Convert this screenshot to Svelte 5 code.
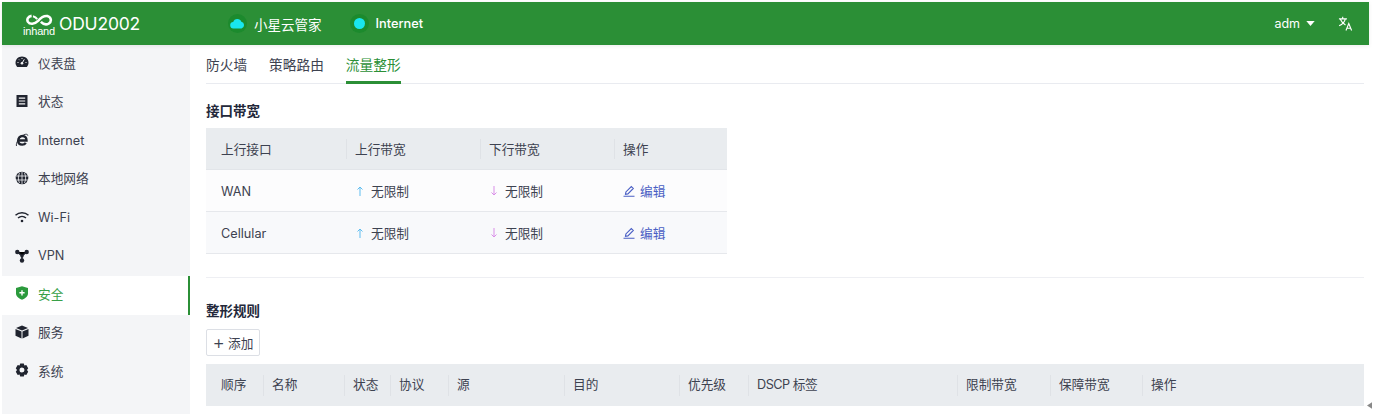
<script>
  const nav = [
    { k: 'dash', t: '仪表盘' }, { k: 'status', t: '状态' }, { k: 'ie', t: 'Internet', latin: true },
    { k: 'globe', t: '本地网络' }, { k: 'wifi', t: 'Wi-Fi', latin: true }, { k: 'vpn', t: 'VPN', latin: true },
    { k: 'shield', t: '安全', active: true }, { k: 'box', t: '服务' }, { k: 'gear', t: '系统' }
  ];
  const rows = ['WAN', 'Cellular'];
  const head1 = ['上行接口', '上行带宽', '下行带宽', '操作'];
  const head2 = ['顺序', '名称', '状态', '协议', '源', '目的', '优先级', 'DSCP 标签', '限制带宽', '保障带宽', '操作'];
</script>

<div class="page">
  <header class="top">
    <div class="brand">
      <div class="logo">
        <svg class="knot" viewBox="0 0 30 13" width="28" height="12" fill="none" stroke="#fff" stroke-width="2.800">
          <path d="M7 2C3 2.500 1.500 6 3 8.500 5 11.500 10 11.500 14 7.500 17 4 20.500 1.500 24.500 2.300 28.500 3.500 29 8.500 25.500 10.500 22.500 12 19.500 11 17 8.500" />
          <path d="M8.500 2.500C10.500 3 12 4 13 5.500" stroke-width="2.200" />
        </svg>
        <span class="inhand">inhand</span>
      </div>
      <span class="model">ODU2002</span>
    </div>
    <div class="stat first">
      <span class="halo">
        <svg viewBox="0 0 14 10" width="15" height="11"><path fill="#19e6ee" d="M3.400 9.600A3 3 0 0 1 3 3.600 4 4 0 0 1 10.600 3.400 3.200 3.200 0 0 1 10.800 9.600Z" /></svg>
      </span>
      <span>小星云管家</span>
    </div>
    <div class="stat second">
      <span class="halo"><span class="dot"></span></span>
      <span class="med">Internet</span>
    </div>
    <div class="grow"></div>
    <span class="user">adm</span>
    <svg class="caret" viewBox="0 0 10 6" width="9" height="5"><path fill="#fff" d="M0 0h10L5 6z" /></svg>
    <svg class="lang" viewBox="0 0 16 16" width="15" height="15" fill="none" stroke="#fff" stroke-width="1.200">
      <path d="M1 3h8.500M5 .8V3M7.800 3C7.200 6 4.300 9 1.200 10.500M2.500 3.500C3.500 6 5.500 8 8 9.500" />
      <path d="M8.500 15.500l3-7.500 3 7.500M9.700 13h3.700" />
    </svg>
  </header>

  <div class="body">
    <nav class="side">
      {#each nav as n}
        <div class="item" class:active={n.active} class:latin={n.latin}>
          <svg viewBox="0 0 14 14" width="14" height="14" class="ico">
            {#if n.k === 'dash'}
              <path fill="currentColor" d="M7 1.500C3.200 1.500.5 4.300.5 7.700c0 1.700.7 3.100 1.700 4.300h9.600c1-1.200 1.700-2.600 1.700-4.300 0-3.400-2.700-6.200-6.500-6.200z" />
              <circle cx="7" cy="8.300" r="1.300" fill="#f4f5f7" /><path stroke="#f4f5f7" d="M7 8.300 9.300 4.300" />
              <path stroke="#f4f5f7" d="M2.500 7.500h1M7 3v1M10.500 7.500h1M4 4.500l.7.700" />
            {:else if n.k === 'status'}
              <path fill="currentColor" fill-rule="evenodd" d="M1.500 1h11v12h-11zM3.800 3.500v1.200h6.400V3.500zm0 2.900v1.200h6.400V6.400zm0 2.900v1.200h6.400V9.300z" />
            {:else if n.k === 'ie'}
              <path fill="none" stroke="currentColor" stroke-width="2.400" d="M3.800 7.500h7.700C11.500 4.500 9.800 3 7.500 3 5 3 3.200 5 3.200 7.800c0 2.400 1.600 3.800 4 3.800 1.600 0 2.800-.6 3.600-1.800" />
              <path fill="none" stroke="currentColor" stroke-width=".9" d="M1.500 13C.5 10.500 4 4 9 1.800c2-1 3.800-.6 3.800.8" />
            {:else if n.k === 'globe'}
              <circle cx="7" cy="7" r="6.300" fill="currentColor" />
              <path fill="none" stroke="#f4f5f7" stroke-width=".8" d="M1 5h12M1 9h12M7 1v12M4.500 2c-1.500 3-1.500 7 0 10M9.500 2c1.500 3 1.500 7 0 10" />
            {:else if n.k === 'wifi'}
              <path fill="none" stroke="currentColor" stroke-width="1.500" d="M.5 5.300c3.700-3.400 9.300-3.400 13 0M3 8c2.300-2 5.700-2 8 0" />
              <circle cx="7" cy="11" r="1.300" fill="currentColor" />
            {:else if n.k === 'vpn'}
              <path stroke="currentColor" stroke-width="1.500" d="M2.500 3 7 7l4.500-4M7 7v4.500" />
              <circle cx="2.300" cy="3" r="2.200" fill="currentColor" /><circle cx="11.700" cy="3" r="2.200" fill="currentColor" />
              <circle cx="7" cy="11.500" r="2.200" fill="currentColor" /><circle cx="7" cy="7" r="1.700" fill="currentColor" />
            {:else if n.k === 'shield'}
              <path fill="currentColor" d="M7 .3 1 2v5.500c0 3 3 5.200 6 6.300 3-1.100 6-3.300 6-6.300V2z" />
              <path stroke="#fff" stroke-width="1.400" d="M7 4.200v5.200M4.400 6.800h5.200" />
            {:else if n.k === 'box'}
              <path fill="currentColor" d="M7 .6 1 3l6 2.400L13 3zM.5 4v6.700L6.500 13.400V6.500zM13.500 4 7.500 6.500v6.900l6-2.700z" />
            {:else}
              <path fill="currentColor" fill-rule="evenodd" d="M5.200.6h3.600l.6 1.800 1.900-.4 1.900 3.200L12 7l1.200 1.800-1.900 3.200-1.900-.4-.6 1.800H5.200l-.6-1.800-1.900.4L.8 8.800 2 7 .8 5.200 2.700 2l1.900.4zM7 4.500a2.500 2.500 0 1 0 0 5 2.500 2.500 0 0 0 0-5z" />
            {/if}
          </svg>
          <span>{n.t}</span>
        </div>
      {/each}
    </nav>

    <main class="main">
      <div class="tabs">
        <span class="tab">防火墙</span>
        <span class="tab">策略路由</span>
        <span class="tab on">流量整形</span>
      </div>

      <h3 class="title t1">接口带宽</h3>
      <div class="table t-if">
        <div class="row head">
          {#each head1 as h, i}
            <div class="cell" class:sep={i > 0}>{h}</div>
          {/each}
        </div>
        {#each rows as r, i}
          <div class="row data" class:alt={i === 1}>
            <div class="cell name">{r}</div>
            <div class="cell limit">
              <svg viewBox="0 0 8 10" width="8" height="10" fill="none" stroke="#5fbdf0"><path d="M4 10V1M1.500 3.500 4 1l2.500 2.500" /></svg>
              无限制
            </div>
            <div class="cell limit">
              <svg viewBox="0 0 8 10" width="8" height="10" fill="none" stroke="#d98fe8"><path d="M4 0v9M1.500 6.500 4 9l2.500-2.500" /></svg>
              无限制
            </div>
            <div class="cell link">
              <svg viewBox="0 0 12 12" width="12" height="12" fill="none" stroke="#4a5fc4" stroke-width="1.100"><path d="M.5 11.300h11M2.500 9.300l.4-2.400L8.300 1.500l2 2-5.400 5.400z" /></svg>
              编辑
            </div>
          </div>
        {/each}
      </div>

      <div class="divider"></div>

      <h3 class="title t2">整形规则</h3>
      <button class="add"><span class="plus">+</span> 添加</button>
      <div class="table t-rule">
        <div class="row head2">
          {#each head2 as h, i}
            <div class="cell" class:sep={i > 0} class:dscp={i === 7}>{h}</div>
          {/each}
        </div>
      </div>
    </main>
  </div>
  <svg class="scroll" viewBox="0 0 6 8" width="5" height="7"><path fill="#888" d="M6 0v8L0 4z" /></svg>
</div>

<style>
  :global(body) { margin: 0; background: #fff; }
  .page {
    position: relative;
    width: 1373px; height: 414px; box-sizing: border-box; overflow: hidden;
    padding: 2px 4px 0 2px;
    font-family: Inter, "Noto Sans CJK SC", sans-serif;
    font-size: 12.700px; color: #3d4250;
  }
  .top {
    height: 43px; background: #2b8f36; color: #fff;
    display: flex; align-items: center; position: relative; z-index: 1;
    box-shadow: 0 1px 4px rgba(0, 0, 0, .08);
  }
  .brand { display: flex; align-items: center; width: 226px; padding-left: 21px; box-sizing: border-box; }
  .logo { display: flex; flex-direction: column; align-items: center; width: 32px; line-height: 1; padding-top: 3px; }
  .knot { display: block; }
  .inhand { font-family: "Liberation Sans", sans-serif; font-size: 11px; line-height: 11px; letter-spacing: -.2px; }
  .model { font-family: Inter, sans-serif; font-size: 17.500px; margin-left: 4px; letter-spacing: -.2px; }
  .stat { display: flex; align-items: center; gap: 7px; font-size: 13.500px; }
  .second { margin-left: 28px; }
  .halo {
    width: 19px; height: 19px; border-radius: 50%; background: #1c8a2d;
    display: flex; align-items: center; justify-content: center;
  }
  .dot { width: 11px; height: 11px; border-radius: 50%; background: #19e6ee; }
  .med { font-weight: 500; font-size: 12.800px; }
  .grow { flex: 1; }
  .user { font-size: 12.500px; }
  .caret { margin-left: 6px; }
  .lang { margin-left: 23px; margin-right: 16px; }

  .body { display: flex; height: 369px; }
  .side { width: 188px; background: #f4f5f7; flex: none; }
  .item {
    height: 38.500px; display: flex; align-items: center; padding: 0 0 4px 13px; gap: 9px;
    box-sizing: border-box; color: #3d4250;
  }
  .item.latin { padding-bottom: 2px; }
  .ico { color: #20242f; flex: none; }
  .item.active { background: #fff; color: #38a048; border-right: 2.500px solid #2b8f36; }
  .item.active .ico { color: #2b9a3c; }

  .main { flex: 1; padding: 0 5px 0 16px; min-width: 0; }
  .tabs { display: flex; gap: 22px; height: 39px; border-bottom: 1px solid #e9ebf0; font-size: 13.700px; box-sizing: border-box; }
  .tab { line-height: 41px; height: 39px; box-sizing: border-box; }
  .tab.on { color: #2b8f36; border-bottom: 3px solid #2b8f36; }
  .title { margin: 0; font-size: 13.500px; font-weight: 700; line-height: 18px; color: #23283a; }
  .t1 { margin-top: 18px; }
  .t2 { margin-top: 24px; }

  .table { display: grid; }
  .t-if { width: 521px; grid-template-columns: 140px 134px 134px 113px; margin-top: 8px; }
  .t-rule { grid-template-columns: 57px 81px 46px 58px 116px 115px 69px 209px 93px 92px 222px; margin-top: 8px; }
  .row { display: grid; grid-template-columns: subgrid; grid-column: 1 / -1; align-items: center; height: 42px; box-sizing: border-box; }
  .head, .head2 { background: #e9ecef; }
  .head { border-bottom: 1px solid #e2e5e9; }
  .data { background: #fcfcfd; border-bottom: 1px solid #e6e8ec; }
  .data.alt { background: #f8f9fb; }
  .cell { padding-left: 15px; white-space: nowrap; display: flex; align-items: center; height: 20px; }
  .name { padding-top: 2px; }
  .sep { border-left: 1px solid #dfe2e6; padding-left: 8px; }
  .head2 .cell { height: 18px; padding-bottom: 3px; }
  .dscp { letter-spacing: -.5px; }
  .limit { padding-left: 10px; gap: 7px; }
  .link { padding-left: 9px; gap: 5px; color: #4a5fc4; }
  .divider { height: 1px; background: #eeeff3; margin-top: 23px; }
  .add {
    display: flex; align-items: center; justify-content: center; gap: 3px; margin-top: 9px;
    width: 54px; height: 27px; padding: 0; background: #fff; border: 1px solid #dcdfe5; border-radius: 2px;
    font: inherit; color: #3d4250;
  }
  .plus { font-size: 19px; line-height: 1; font-weight: 300; }
  .scroll { position: absolute; right: 1px; bottom: 5px; }
</style>
